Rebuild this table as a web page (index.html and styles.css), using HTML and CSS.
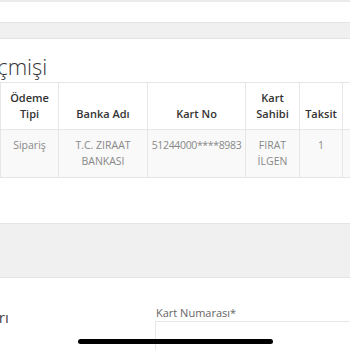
FILE: index.html
```html
<!DOCTYPE html>
<html lang="tr">
  <head>
    <meta charset="UTF-8" />
    <meta name="viewport" content="width=device-width, initial-scale=1.0" />
    <title>Ödeme Geçmişi</title>
    <link rel="stylesheet" href="styles.css">
  </head>
  <body>
    <div class="topline"></div>
    <div class="breadcrumb"></div>
    <h2 class="title">Ödeme Geçmişi</h2>
    <div class="table-wrap">
      <table class="history">
        <colgroup>
          <col class="c1" />
          <col class="c2" />
          <col class="c3" />
          <col class="c4" />
          <col class="c5" />
          <col class="c6" />
        </colgroup>
        <thead>
          <tr>
            <th>Ödeme Tipi</th>
            <th>Banka Adı</th>
            <th>Kart No</th>
            <th>Kart Sahibi</th>
            <th>Taksit</th>
            <th>Tarih</th>
          </tr>
        </thead>
        <tbody>
          <tr>
            <td>Sipariş</td>
            <td>T.C. ZIRAAT BANKASI</td>
            <td class="card-no">51244000****8983</td>
            <td>FIRAT İLGEN</td>
            <td>1</td>
            <td>2022-10-10</td>
          </tr>
        </tbody>
      </table>
    </div>
    <div class="section-band"></div>
    <div class="card-form">
      <h3 class="form-title">Kayıtlı Kartları</h3>
      <div class="field">
        <label for="cardNo">Kart Numarası*</label>
        <input type="text" id="cardNo" />
      </div>
    </div>
    <div class="home-bar"></div>
  </body>
</html>
```
FILE: styles.css
```css
html,
body {
  margin: 0;
  width: 350px;
  height: 350px;
  overflow: hidden;
  background: #fff;
  font-family: "Open Sans", sans-serif;
  color: #333;
}
.topline {
  height: 2px;
  background: #ebebeb;
  margin-bottom: 20px;
}
.breadcrumb {
  height: 15px;
  background: #f0f0f0;
  border-top: 1px solid #e4e4e4;
  border-bottom: 1px solid #e4e4e4;
}
.title {
  margin: 12px 0 0 -110px;
  height: 31px;
  font-size: 22px;
  line-height: 30px;
  font-weight: 300;
  white-space: nowrap;
  color: #333;
}
.table-wrap {
  width: 350px;
  overflow: hidden;
}
.history {
  table-layout: fixed;
  width: 442px;
  border-collapse: collapse;
  font-size: 11px;
  line-height: 16px;
}
.history .c1 { width: 58px; }
.history .c2 { width: 89px; }
.history .c3 { width: 98px; }
.history .c4 { width: 54px; }
.history .c5 { width: 43px; }
.history .c6 { width: 100px; }
.history th,
.history td {
  border: 1px solid #e6e6e6;
  text-align: center;
  padding: 7px 3px;
}
.history th {
  vertical-align: bottom;
  font-weight: 600;
  color: #333;
}
.history td {
  vertical-align: top;
  font-size: 10.5px;
  color: #888;
  background: #f9f9f9;
  padding-bottom: 8px;
}
.history td.card-no {
  letter-spacing: -0.35px;
}
.section-band {
  margin-top: 45px;
  height: 53px;
  background: #f0f0f0;
  border-top: 1px solid #e4e4e4;
  border-bottom: 1px solid #e4e4e4;
}
.card-form {
  display: grid;
  grid-template-columns: 155px 1fr;
  padding-top: 27px;
}
.form-title {
  margin: 2px 0 0 -88px;
  font-size: 15px;
  font-weight: 400;
  line-height: 20px;
  white-space: nowrap;
  color: #444;
}
.field label {
  display: block;
  padding-left: 1px;
  font-size: 11px;
  line-height: 16px;
  color: #666;
}
.field input {
  display: block;
  box-sizing: border-box;
  width: 220px;
  height: 34px;
  margin-top: 0;
  border: 1px solid #e6e6e6;
  outline: none;
}
.home-bar {
  position: absolute;
  left: 78px;
  top: 339px;
  width: 195px;
  height: 5px;
  border-radius: 3px;
  background: #000;
}
```
